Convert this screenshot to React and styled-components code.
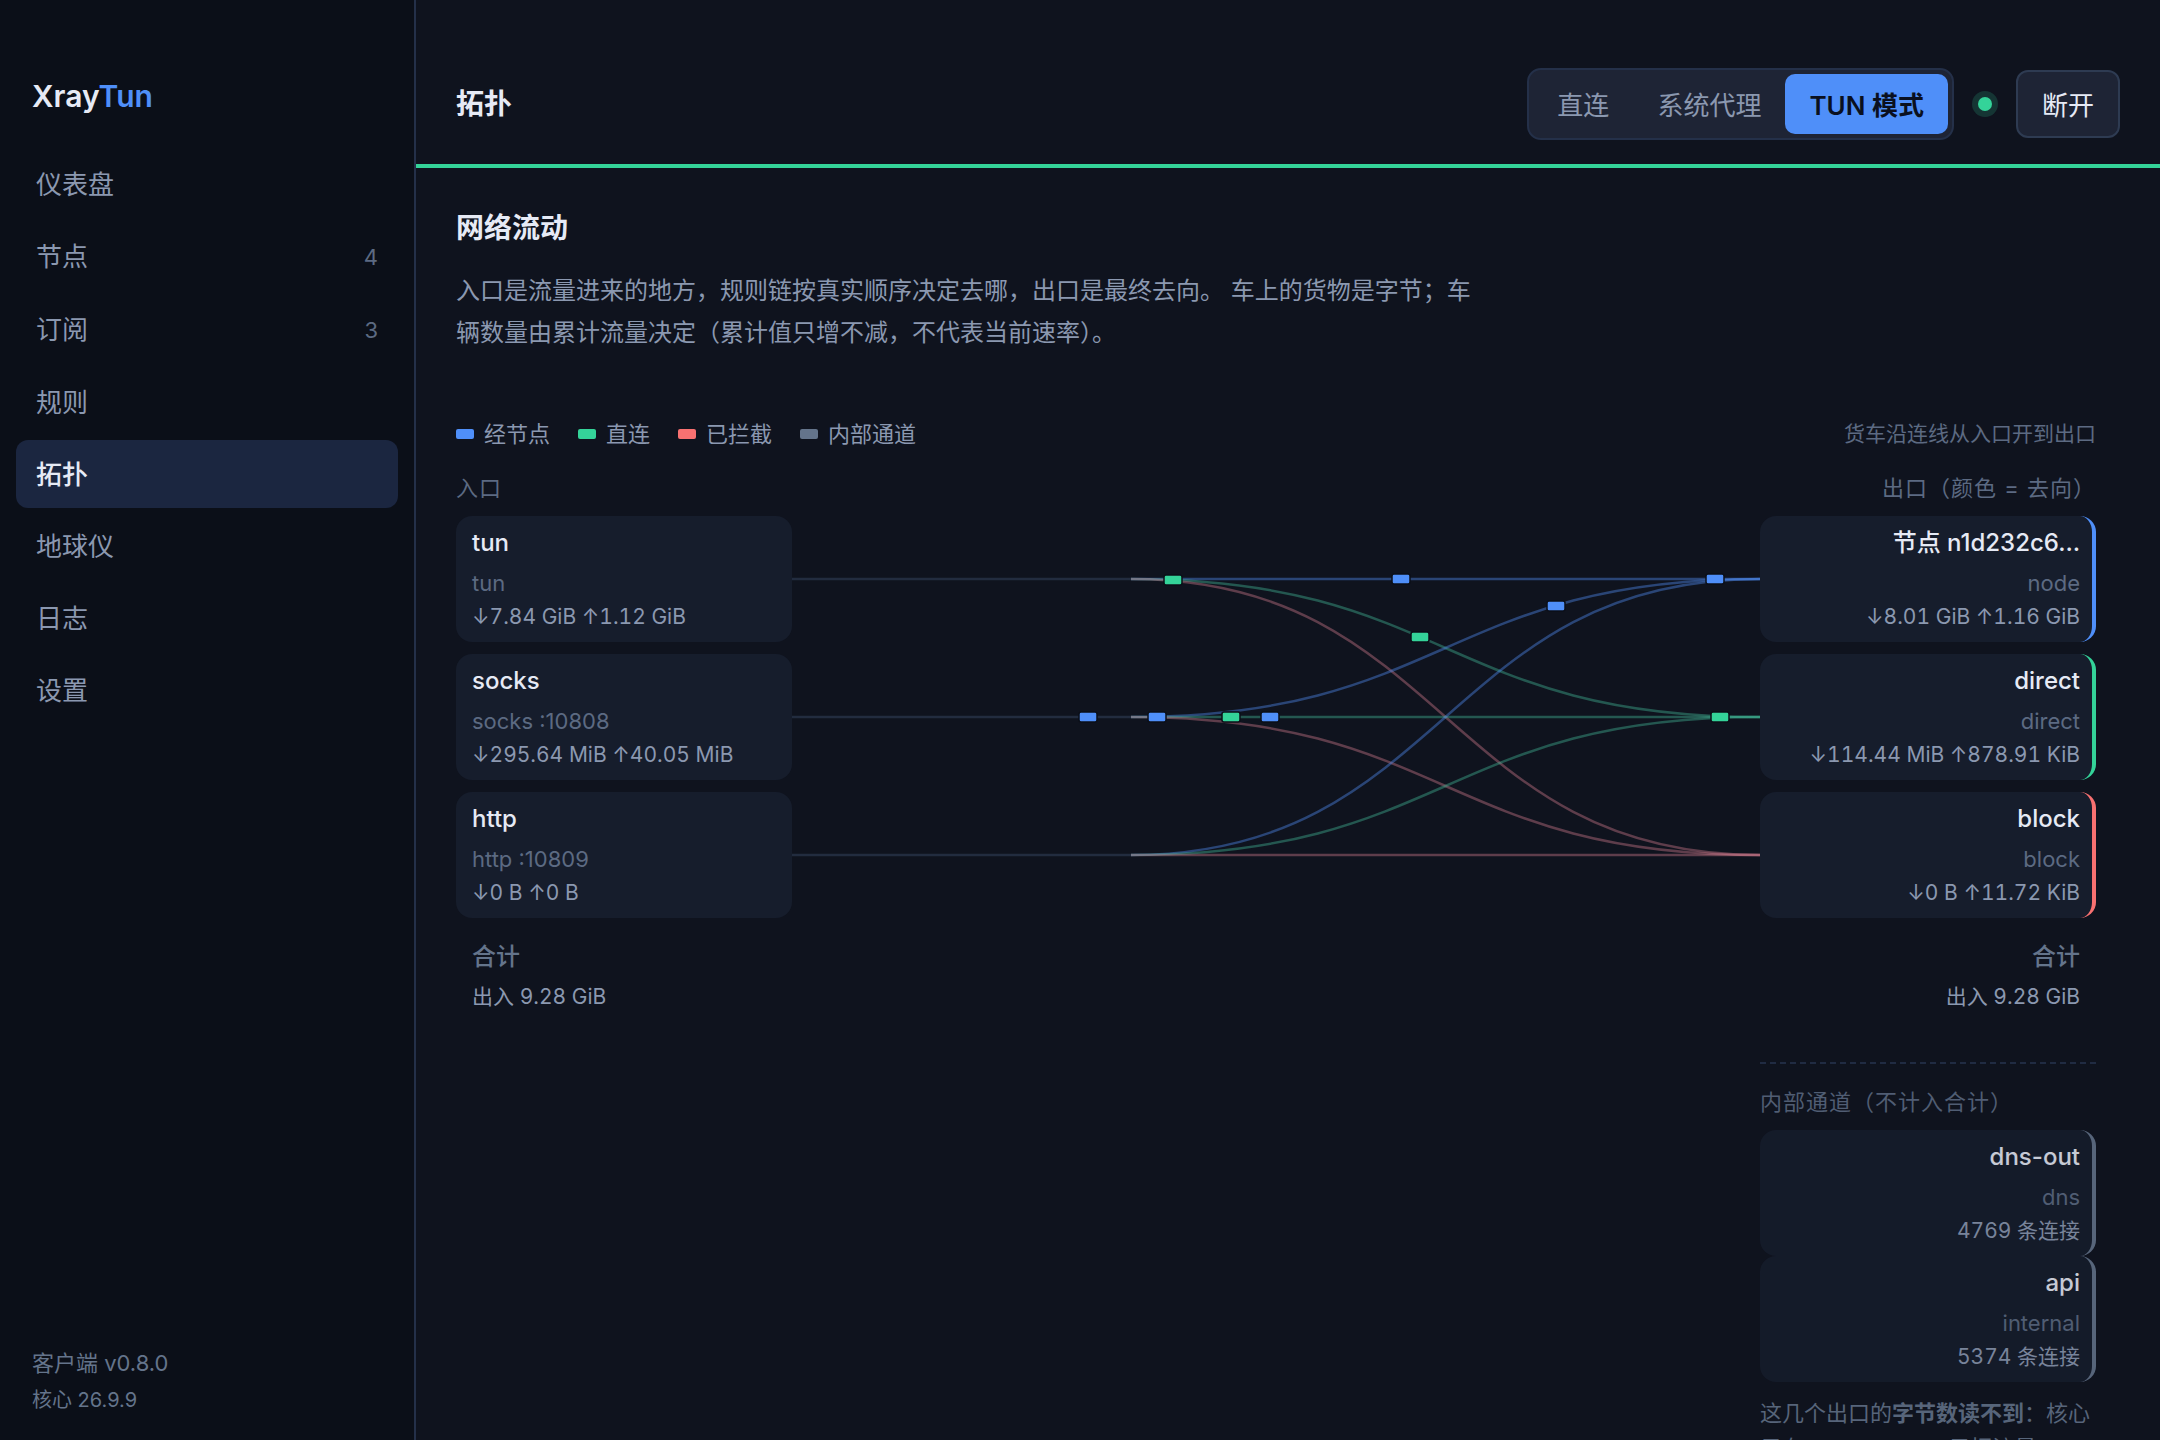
import React, {useState} from "react";
import styled, {createGlobalStyle, css} from "styled-components";

const color = {
  bg: "#0f131e",
  sidebar: "#0b0f18",
  card: "#161d2c",
  control: "#1e2435",
  active: "#1b2640",
  border: "#243049",
  borderStrong: "#2e3b52",
  text: "#e6eaf5",
  muted: "#8b98b0",
  dim: "#5c6a82",
  blue: "#4f8ff9",
  green: "#34d399",
  red: "#f87171",
  gray: "#64748b",
};

// softer than the solid tones, the lines overlap a lot
const lineColor = {
  blue: "#5292fa",
  green: "#43bf9b",
  red: "#d47e8e",
};

const GlobalStyle = createGlobalStyle`
  * {
    box-sizing: border-box;
  }

  body {
    margin: 0;
    background: ${color.bg};
    color: ${color.text};
    font-family: Inter, "Noto Sans CJK SC", sans-serif;
    font-size: 26px;
    -webkit-font-smoothing: antialiased;
  }

  button {
    font: inherit;
    cursor: pointer;
  }

  h1, h2, h3, p, ul {
    margin: 0;
    padding: 0;
  }
`;

const Layout = styled.div`
  display: grid;
  grid-template-columns: 416px minmax(0, 1fr);
  height: 100vh;
  overflow: hidden;
`;

const Sidebar = styled.aside`
  display: flex;
  flex-direction: column;
  padding: 76px 16px 21px;
  background: ${color.sidebar};
  border-right: 2px solid ${color.border};
`;

const Brand = styled.div`
  padding: 0 16px;
  margin-bottom: 34px;
  font-size: 30px;
  line-height: 40px;
  font-weight: 600;

  span {
    color: ${color.blue};
  }
`;

const Nav = styled.nav`
  display: flex;
  flex-direction: column;
  gap: 4px;
`;

const NavLink = styled.a`
  display: flex;
  align-items: center;
  justify-content: space-between;
  height: ${({$counted}) => $counted ? 69 : 68}px;
  padding: 0 20px 4px;
  border-radius: 12px;
  color: ${color.muted};
  text-decoration: none;

  ${({$active}) => $active && css`
    background: ${color.active};
    color: ${color.text};
    font-weight: 500;
  `}
`;

const Badge = styled.span`
  padding-top: 4px;
  font-size: 22px;
  color: ${color.dim};
`;

const Version = styled.div`
  margin-top: auto;
  padding: 0 16px;
  font-size: 22px;
  line-height: 36px;
  color: ${color.gray};

  small {
    display: block;
    font-size: 20px;
    line-height: 38px;
  }
`;

const Main = styled.main`
  display: flex;
  flex-direction: column;
  min-width: 0;
  overflow: hidden;
`;

const Topbar = styled.header`
  display: flex;
  flex-shrink: 0;
  align-items: center;
  gap: 24px;
  padding: 68px 40px 24px;
  border-bottom: 4px solid ${color.green};
`;

const PageTitle = styled.h1`
  margin-right: auto;
  padding-bottom: 4px;
  font-size: 28px;
  font-weight: 600;
`;

const Segment = styled.div`
  display: flex;
  padding: 4px;
  border: 2px solid ${color.border};
  border-radius: 14px;
  background: ${color.control};
`;

const SegmentButton = styled.button`
  height: 60px;
  padding: 0 24px 2px;
  border: 0;
  border-radius: 10px;
  background: transparent;
  color: ${color.muted};

  ${({$active}) => $active && css`
    background: ${color.blue};
    color: #0a1020;
    font-weight: 600;
  `}
`;

const StatusDot = styled.span`
  width: 14px;
  height: 14px;
  border-radius: 50%;
  background: ${color.green};
  box-shadow: 0 0 0 6px rgba(52, 211, 153, 0.18);
`;

const PowerButton = styled.button`
  height: 68px;
  padding: 0 24px 2px;
  border: 2px solid ${color.borderStrong};
  border-radius: 12px;
  background: ${color.control};
  color: ${color.text};
`;

const Content = styled.section`
  padding: 40px 64px 0 40px;
`;

const SectionTitle = styled.h2`
  font-size: 28px;
  line-height: 40px;
  font-weight: 600;
`;

const Lead = styled.p`
  max-width: 1024px;
  margin-top: 22px;
  font-size: 24px;
  line-height: 42px;
  color: ${color.muted};
`;

const LegendBar = styled.div`
  display: flex;
  align-items: center;
  justify-content: space-between;
  margin-top: 64px;
  line-height: 32px;
`;

const Legend = styled.ul`
  display: flex;
  gap: 28px;
  list-style: none;
  font-size: 22px;
  color: ${color.muted};
`;

const LegendItem = styled.li`
  display: flex;
  align-items: center;
  gap: 10px;

  &::before {
    content: "";
    width: 18px;
    height: 10px;
    border-radius: 2px;
    background: ${({$tone}) => color[$tone]};
  }
`;

const Hint = styled.span`
  font-size: 21px;
  color: ${color.dim};
`;

const Topology = styled.div`
  display: grid;
  grid-template-columns: 336px minmax(0, 1fr) 336px;
  margin-top: 22px;
`;

const Column = styled.div`
  display: flex;
  flex-direction: column;
  gap: 12px;
  text-align: ${({$end}) => $end ? "right" : "left"};
`;

const ColumnLabel = styled.h3`
  font-size: 22px;
  line-height: 32px;
  font-weight: 400;
  letter-spacing: 1px;
  color: ${color.dim};
`;

const Card = styled.article`
  padding: 8px 16px;
  border-radius: 16px;
  background: ${color.card};
  ${({$tone}) => $tone && css`
    padding-right: 12px;
    border-right: 4px solid ${color[$tone]};
  `}
`;

const Total = styled.div`
  padding: 8px 16px;
`;

const Name = styled.div`
  margin-bottom: 4px;
  font-size: 24px;
  line-height: 38px;
  font-weight: 500;
  color: ${({$dim}) => $dim ? color.gray : color.text};
`;

const Meta = styled.div`
  font-size: 22px;
  line-height: 34px;
  color: ${color.dim};
`;

const Amount = styled.div`
  font-size: 21px;
  line-height: 34px;
  font-variant-numeric: tabular-nums;
  color: ${color.muted};
`;

const Internal = styled.div`
  margin-top: 28px;
  padding-top: 22px;
  border-top: 2px dashed ${color.border};
  opacity: 0.85;
`;

const InternalHead = styled(ColumnLabel)`
  margin-bottom: 12px;
  text-align: left;
`;

const Note = styled.p`
  margin-top: 14px;
  font-size: 22px;
  line-height: 35px;
  text-align: left;
  color: ${color.gray};
`;

const Flow = styled.svg`
  display: block;
  width: 100%;
  height: 402px;
  margin-top: 44px;
`;

const NAV = [
  {label: "仪表盘"},
  {label: "节点", count: 4},
  {label: "订阅", count: 3},
  {label: "规则"},
  {label: "拓扑"},
  {label: "地球仪"},
  {label: "日志"},
  {label: "设置"},
];

const MODES = ["直连", "系统代理", "TUN 模式"];

const LEGEND = [
  {label: "经节点", tone: "blue"},
  {label: "直连", tone: "green"},
  {label: "已拦截", tone: "red"},
  {label: "内部通道", tone: "gray"},
];

const INBOUNDS = [
  {name: "tun", meta: "tun", amount: "↓7.84 GiB ↑1.12 GiB"},
  {name: "socks", meta: "socks :10808", amount: "↓295.64 MiB ↑40.05 MiB"},
  {name: "http", meta: "http :10809", amount: "↓0 B ↑0 B"},
];

const OUTBOUNDS = [
  {name: "节点 n1d232c6…", meta: "node", amount: "↓8.01 GiB ↑1.16 GiB", tone: "blue"},
  {name: "direct", meta: "direct", amount: "↓114.44 MiB ↑878.91 KiB", tone: "green"},
  {name: "block", meta: "block", amount: "↓0 B ↑11.72 KiB", tone: "red"},
];

const INTERNALS = [
  {name: "dns-out", meta: "dns", amount: "4769 条连接", tone: "gray"},
  {name: "api", meta: "internal", amount: "5374 条连接", tone: "gray"},
];

// flow canvas: rows sit on the centres of the cards
const ROWS = [63, 201, 339];
const SPLIT = 339;
const END = 968;
const MID = (SPLIT + END) / 2;

const TRUCKS = [
  {x: 609, y: 63, tone: "blue"},
  {x: 923, y: 63, tone: "blue"},
  {x: 381, y: 64, tone: "green"},
  {x: 628, y: 121, tone: "green"},
  {x: 764, y: 90, tone: "blue"},
  {x: 296, y: 201, tone: "blue"},
  {x: 478, y: 201, tone: "blue"},
  {x: 365, y: 201, tone: "blue"},
  {x: 439, y: 201, tone: "green"},
  {x: 928, y: 201, tone: "green"},
];

const FlowChart = () => (
  <Flow viewBox="0 0 968 402" preserveAspectRatio="none" fill="none" aria-hidden="true">
    {ROWS.map(y => (
      <path key={y} d={`M0 ${y}H${SPLIT}`} stroke="#222c3f" strokeWidth="2.5" />
    ))}
    {ROWS.map(from => OUTBOUNDS.map(({tone}, i) => (
      <path
        key={`${from}-${tone}`}
        d={`M${SPLIT} ${from}C${MID} ${from} ${MID} ${ROWS[i]} ${END} ${ROWS[i]}`}
        stroke={lineColor[tone]}
        strokeOpacity="0.4"
        strokeWidth="2.5"
      />
    )))}
    {TRUCKS.map(({x, y, tone}) => (
      <rect
        key={`${x}-${y}`}
        x={x - 9}
        y={y - 5}
        width="18"
        height="10"
        rx="2"
        fill={color[tone]}
        stroke={color.sidebar}
        strokeWidth="1.5"
      />
    ))}
  </Flow>
);

const NodeCard = ({name, meta, amount, tone}) => (
  <Card $tone={tone}>
    <Name>{name}</Name>
    <Meta>{meta}</Meta>
    <Amount>{amount}</Amount>
  </Card>
);

const Sum = () => (
  <Total>
    <Name $dim>合计</Name>
    <Amount>出入 9.28 GiB</Amount>
  </Total>
);

const App = () => {
  const [page, setPage] = useState("拓扑");
  const [mode, setMode] = useState("TUN 模式");

  return (
    <>
      <GlobalStyle />
      <Layout>
        <Sidebar>
          <Brand>Xray<span>Tun</span></Brand>
          <Nav>
            {NAV.map(({label, count}) => (
              <NavLink
                key={label}
                href="#"
                $active={page === label}
                $counted={Boolean(count)}
                onClick={() => setPage(label)}
              >
                {label}
                {count && <Badge>{count}</Badge>}
              </NavLink>
            ))}
          </Nav>
          <Version>
            客户端 v0.8.0
            <small>核心 26.9.9</small>
          </Version>
        </Sidebar>
        <Main>
          <Topbar>
            <PageTitle>{page}</PageTitle>
            <Segment>
              {MODES.map(item => (
                <SegmentButton key={item} type="button" $active={mode === item} onClick={() => setMode(item)}>
                  {item}
                </SegmentButton>
              ))}
            </Segment>
            <StatusDot />
            <PowerButton type="button">断开</PowerButton>
          </Topbar>
          <Content>
            <SectionTitle>网络流动</SectionTitle>
            <Lead>
              入口是流量进来的地方，规则链按真实顺序决定去哪，出口是最终去向。 车上的货物是字节；车辆数量由累计流量决定（累计值只增不减，不代表当前速率）。
            </Lead>
            <LegendBar>
              <Legend>
                {LEGEND.map(({label, tone}) => (
                  <LegendItem key={label} $tone={tone}>{label}</LegendItem>
                ))}
              </Legend>
              <Hint>货车沿连线从入口开到出口</Hint>
            </LegendBar>
            <Topology>
              <Column>
                <ColumnLabel>入口</ColumnLabel>
                {INBOUNDS.map(item => <NodeCard key={item.name} {...item} />)}
                <Sum />
              </Column>
              <FlowChart />
              <Column $end>
                <ColumnLabel>出口（颜色 = 去向）</ColumnLabel>
                {OUTBOUNDS.map(item => <NodeCard key={item.name} {...item} />)}
                <Sum />
                <Internal>
                  <InternalHead>内部通道（不计入合计）</InternalHead>
                  {INTERNALS.map(item => <NodeCard key={item.name} {...item} />)}
                  <Note>
                    这几个出口的<b>字节数读不到</b>：核心只有 Core Control 只把流量
                  </Note>
                </Internal>
              </Column>
            </Topology>
          </Content>
        </Main>
      </Layout>
    </>
  );
};

export default App;
